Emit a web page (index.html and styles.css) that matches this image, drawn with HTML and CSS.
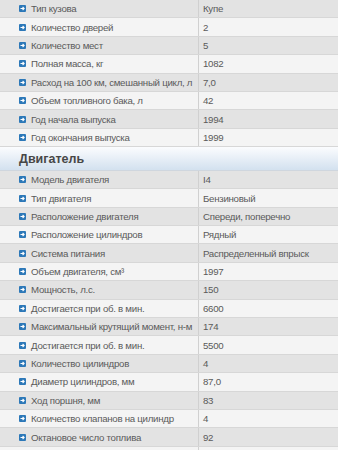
FILE: index.html
```html
<!DOCTYPE html>
<html lang="ru">
<head>
<meta charset="utf-8">
<title>Характеристики</title>
<link rel="stylesheet" href="styles.css">
</head>
<body>
<div class="specs">
  <div class="row"><div class="k"><svg class="ic" viewBox="0 0 7 7"><rect width="7" height="7" rx="1" fill="#2c78b8"/><path d="M1.5 3.5h3.5M3.6 2l1.5 1.5-1.5 1.5" stroke="#fff" stroke-width="1.1" fill="none"/></svg>Тип кузова</div><div class="v">Купе</div></div>
  <div class="row"><div class="k"><svg class="ic" viewBox="0 0 7 7"><rect width="7" height="7" rx="1" fill="#2c78b8"/><path d="M1.5 3.5h3.5M3.6 2l1.5 1.5-1.5 1.5" stroke="#fff" stroke-width="1.1" fill="none"/></svg>Количество дверей</div><div class="v">2</div></div>
  <div class="row"><div class="k"><svg class="ic" viewBox="0 0 7 7"><rect width="7" height="7" rx="1" fill="#2c78b8"/><path d="M1.5 3.5h3.5M3.6 2l1.5 1.5-1.5 1.5" stroke="#fff" stroke-width="1.1" fill="none"/></svg>Количество мест</div><div class="v">5</div></div>
  <div class="row"><div class="k"><svg class="ic" viewBox="0 0 7 7"><rect width="7" height="7" rx="1" fill="#2c78b8"/><path d="M1.5 3.5h3.5M3.6 2l1.5 1.5-1.5 1.5" stroke="#fff" stroke-width="1.1" fill="none"/></svg>Полная масса, кг</div><div class="v">1082</div></div>
  <div class="row"><div class="k"><svg class="ic" viewBox="0 0 7 7"><rect width="7" height="7" rx="1" fill="#2c78b8"/><path d="M1.5 3.5h3.5M3.6 2l1.5 1.5-1.5 1.5" stroke="#fff" stroke-width="1.1" fill="none"/></svg>Расход на 100 км, смешанный цикл, л</div><div class="v">7,0</div></div>
  <div class="row"><div class="k"><svg class="ic" viewBox="0 0 7 7"><rect width="7" height="7" rx="1" fill="#2c78b8"/><path d="M1.5 3.5h3.5M3.6 2l1.5 1.5-1.5 1.5" stroke="#fff" stroke-width="1.1" fill="none"/></svg>Объем топливного бака, л</div><div class="v">42</div></div>
  <div class="row"><div class="k"><svg class="ic" viewBox="0 0 7 7"><rect width="7" height="7" rx="1" fill="#2c78b8"/><path d="M1.5 3.5h3.5M3.6 2l1.5 1.5-1.5 1.5" stroke="#fff" stroke-width="1.1" fill="none"/></svg>Год начала выпуска</div><div class="v">1994</div></div>
  <div class="row"><div class="k"><svg class="ic" viewBox="0 0 7 7"><rect width="7" height="7" rx="1" fill="#2c78b8"/><path d="M1.5 3.5h3.5M3.6 2l1.5 1.5-1.5 1.5" stroke="#fff" stroke-width="1.1" fill="none"/></svg>Год окончания выпуска</div><div class="v">1999</div></div>
  <div class="head">Двигатель</div>
  <div class="row"><div class="k"><svg class="ic" viewBox="0 0 7 7"><rect width="7" height="7" rx="1" fill="#2c78b8"/><path d="M1.5 3.5h3.5M3.6 2l1.5 1.5-1.5 1.5" stroke="#fff" stroke-width="1.1" fill="none"/></svg>Модель двигателя</div><div class="v">I4</div></div>
  <div class="row"><div class="k"><svg class="ic" viewBox="0 0 7 7"><rect width="7" height="7" rx="1" fill="#2c78b8"/><path d="M1.5 3.5h3.5M3.6 2l1.5 1.5-1.5 1.5" stroke="#fff" stroke-width="1.1" fill="none"/></svg>Тип двигателя</div><div class="v">Бензиновый</div></div>
  <div class="row"><div class="k"><svg class="ic" viewBox="0 0 7 7"><rect width="7" height="7" rx="1" fill="#2c78b8"/><path d="M1.5 3.5h3.5M3.6 2l1.5 1.5-1.5 1.5" stroke="#fff" stroke-width="1.1" fill="none"/></svg>Расположение двигателя</div><div class="v">Спереди, поперечно</div></div>
  <div class="row"><div class="k"><svg class="ic" viewBox="0 0 7 7"><rect width="7" height="7" rx="1" fill="#2c78b8"/><path d="M1.5 3.5h3.5M3.6 2l1.5 1.5-1.5 1.5" stroke="#fff" stroke-width="1.1" fill="none"/></svg>Расположение цилиндров</div><div class="v">Рядный</div></div>
  <div class="row"><div class="k"><svg class="ic" viewBox="0 0 7 7"><rect width="7" height="7" rx="1" fill="#2c78b8"/><path d="M1.5 3.5h3.5M3.6 2l1.5 1.5-1.5 1.5" stroke="#fff" stroke-width="1.1" fill="none"/></svg>Система питания</div><div class="v">Распределенный впрыск</div></div>
  <div class="row"><div class="k"><svg class="ic" viewBox="0 0 7 7"><rect width="7" height="7" rx="1" fill="#2c78b8"/><path d="M1.5 3.5h3.5M3.6 2l1.5 1.5-1.5 1.5" stroke="#fff" stroke-width="1.1" fill="none"/></svg>Объем двигателя, см³</div><div class="v">1997</div></div>
  <div class="row"><div class="k"><svg class="ic" viewBox="0 0 7 7"><rect width="7" height="7" rx="1" fill="#2c78b8"/><path d="M1.5 3.5h3.5M3.6 2l1.5 1.5-1.5 1.5" stroke="#fff" stroke-width="1.1" fill="none"/></svg>Мощность, л.с.</div><div class="v">150</div></div>
  <div class="row"><div class="k"><svg class="ic" viewBox="0 0 7 7"><rect width="7" height="7" rx="1" fill="#2c78b8"/><path d="M1.5 3.5h3.5M3.6 2l1.5 1.5-1.5 1.5" stroke="#fff" stroke-width="1.1" fill="none"/></svg>Достигается при об. в мин.</div><div class="v">6600</div></div>
  <div class="row"><div class="k"><svg class="ic" viewBox="0 0 7 7"><rect width="7" height="7" rx="1" fill="#2c78b8"/><path d="M1.5 3.5h3.5M3.6 2l1.5 1.5-1.5 1.5" stroke="#fff" stroke-width="1.1" fill="none"/></svg>Максимальный крутящий момент, н-м</div><div class="v">174</div></div>
  <div class="row"><div class="k"><svg class="ic" viewBox="0 0 7 7"><rect width="7" height="7" rx="1" fill="#2c78b8"/><path d="M1.5 3.5h3.5M3.6 2l1.5 1.5-1.5 1.5" stroke="#fff" stroke-width="1.1" fill="none"/></svg>Достигается при об. в мин.</div><div class="v">5500</div></div>
  <div class="row"><div class="k"><svg class="ic" viewBox="0 0 7 7"><rect width="7" height="7" rx="1" fill="#2c78b8"/><path d="M1.5 3.5h3.5M3.6 2l1.5 1.5-1.5 1.5" stroke="#fff" stroke-width="1.1" fill="none"/></svg>Количество цилиндров</div><div class="v">4</div></div>
  <div class="row"><div class="k"><svg class="ic" viewBox="0 0 7 7"><rect width="7" height="7" rx="1" fill="#2c78b8"/><path d="M1.5 3.5h3.5M3.6 2l1.5 1.5-1.5 1.5" stroke="#fff" stroke-width="1.1" fill="none"/></svg>Диаметр цилиндров, мм</div><div class="v">87,0</div></div>
  <div class="row"><div class="k"><svg class="ic" viewBox="0 0 7 7"><rect width="7" height="7" rx="1" fill="#2c78b8"/><path d="M1.5 3.5h3.5M3.6 2l1.5 1.5-1.5 1.5" stroke="#fff" stroke-width="1.1" fill="none"/></svg>Ход поршня, мм</div><div class="v">83</div></div>
  <div class="row"><div class="k"><svg class="ic" viewBox="0 0 7 7"><rect width="7" height="7" rx="1" fill="#2c78b8"/><path d="M1.5 3.5h3.5M3.6 2l1.5 1.5-1.5 1.5" stroke="#fff" stroke-width="1.1" fill="none"/></svg>Количество клапанов на цилиндр</div><div class="v">4</div></div>
  <div class="row"><div class="k"><svg class="ic" viewBox="0 0 7 7"><rect width="7" height="7" rx="1" fill="#2c78b8"/><path d="M1.5 3.5h3.5M3.6 2l1.5 1.5-1.5 1.5" stroke="#fff" stroke-width="1.1" fill="none"/></svg>Октановое число топлива</div><div class="v">92</div></div>
  <div class="row"><div class="k"></div><div class="v"></div></div>
</div>
</body>
</html>
```
FILE: styles.css
```css
html, body {
  margin: 0;
  padding: 0;
  background: #f3f3f3;
}
body {
  font-family: "Liberation Sans", Arial, sans-serif;
  font-size: 9.7px;
  letter-spacing: -0.28px;
  color: #5a5a5a;
  overflow: hidden;
}
.specs {
  display: flex;
  flex-direction: column;
}
.row {
  display: grid;
  grid-template-columns: 199px 1fr;
  height: 18.4px;
  box-sizing: border-box;
  border-bottom: 1px solid #d7d7d7;
  background: #f4f4f4;
  flex: none;
}
.row:nth-child(odd) {
  background: #e3e3e3;
}
.specs .head ~ .row:nth-child(odd) {
  background: #f4f4f4;
}
.specs .head ~ .row:nth-child(even) {
  background: #e3e3e3;
}
.k {
  display: flex;
  align-items: center;
  padding-left: 19px;
  border-right: 1px solid #d0d0d0;
  white-space: nowrap;
  overflow: hidden;
}
.v {
  display: flex;
  align-items: center;
  padding-left: 4px;
  white-space: nowrap;
}
.ic {
  width: 7px;
  height: 7px;
  margin-right: 5px;
  flex: none;
}
.head {
  height: 23.8px;
  box-sizing: border-box;
  display: flex;
  align-items: center;
  padding-left: 19px;
  font-size: 12.5px;
  letter-spacing: 0;
  font-weight: bold;
  color: #474747;
  background: linear-gradient(#fbfcfe, #d3e1ef);
  border-bottom: 1px solid #cfd6de;
  flex: none;
}
```
